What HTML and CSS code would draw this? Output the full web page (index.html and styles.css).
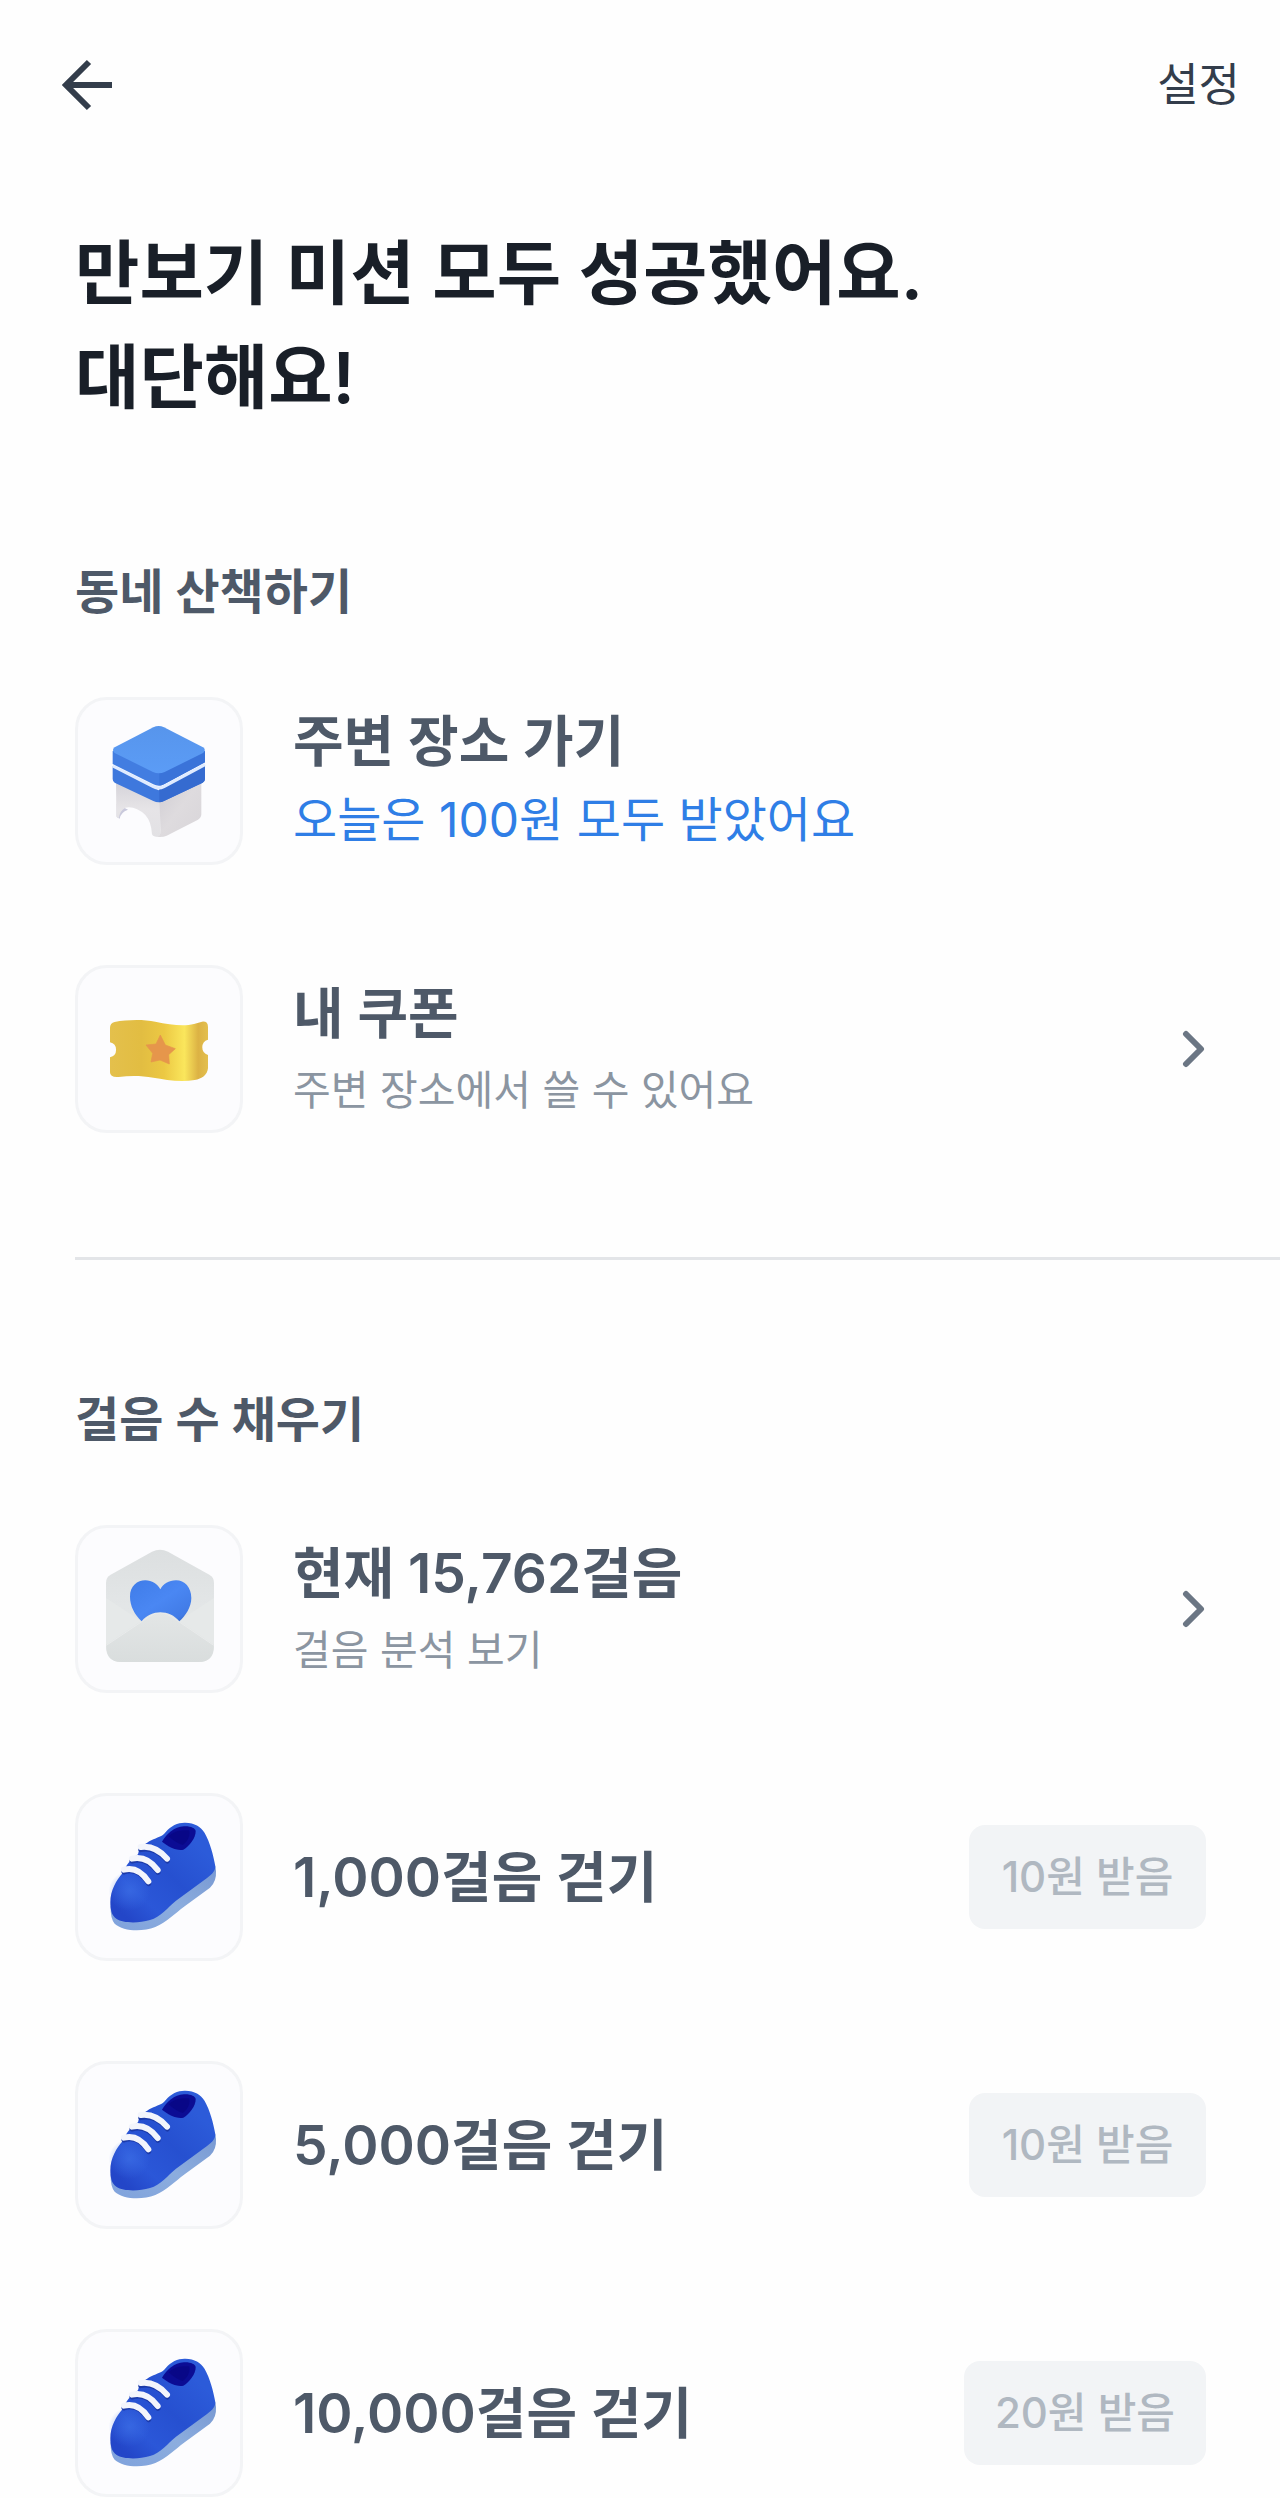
FILE: index.html
```html
<!DOCTYPE html>
<html lang="ko">
<head>
<meta charset="utf-8">
<meta name="viewport" content="width=device-width, initial-scale=1">
<title>만보기</title>
<link rel="stylesheet" href="styles.css">
</head>
<body>
<svg class="defs" width="0" height="0" aria-hidden="true">
  <defs>
    <linearGradient id="shoe-body" x1="0.1" y1="0.9" x2="0.8" y2="0.2">
      <stop offset="0" stop-color="#2346c8"/><stop offset="0.25" stop-color="#2b57d8"/><stop offset="0.6" stop-color="#2650d0"/><stop offset="1" stop-color="#2c5bd9"/>
    </linearGradient>
    <radialGradient id="shoe-toe" cx="0.5" cy="0.5" r="0.5">
      <stop offset="0" stop-color="#3c6ee6" stop-opacity="0.7"/><stop offset="1" stop-color="#3c6ee6" stop-opacity="0"/>
    </radialGradient>
    <linearGradient id="shoe-sole" x1="0" y1="1" x2="1" y2="0">
      <stop offset="0" stop-color="#7fa2dc"/><stop offset="0.5" stop-color="#8cadde"/><stop offset="1" stop-color="#7798d2"/>
    </linearGradient>
  </defs>
  <symbol id="shoe" viewBox="24 19 486 486">
    <path d="M122 350 Q121 388 134 402 C158 424 214 428 256 412 C290 398 314 372 344 350 L420 294 Q440 276 438 244 L436 230 Z" fill="url(#shoe-sole)"/>
    <path d="M121 338 C121 302 140 270 158 250 C170 222 188 204 204 194 C208 174 228 160 244 152 C262 142 276 142 288 126 C302 108 326 98 346 99 C374 100 392 110 404 130 C420 158 430 196 436 230 C436 246 424 256 404 270 L318 333 C292 354 272 382 240 391 C204 402 158 400 140 388 C124 378 121 358 121 338 Z" fill="url(#shoe-body)"/>
    <ellipse cx="178" cy="304" rx="62" ry="60" fill="url(#shoe-toe)"/>
    <path d="M276 156 C290 132 312 112 342 110 C362 109 376 116 377 124 C378 144 358 170 340 180 C318 184 294 170 276 156 Z" fill="#0b0c94"/>
    <path d="M296 140 C308 126 330 120 356 122 C364 128 354 158 338 166 Q314 158 296 140 Z" fill="#06057f" opacity="0.6"/>
    <g fill="none" stroke-linecap="round">
      <path d="M212 180 Q256 170 292 214 M186 214 Q230 200 264 248 M162 247 Q204 230 236 282" stroke="#1b3aa9" stroke-width="15"/>
      <path d="M212 172 Q256 166 291 207 M186 207 Q230 197 263 241 M162 240 Q204 229 235 275" stroke="#f3f5fc" stroke-width="18"/>
    </g>
  </symbol>
</svg>

<header class="topbar">
  <button class="back" type="button" aria-label="뒤로">
    <svg width="54" height="56" viewBox="0 0 54 56" fill="none" stroke="#333d4b" stroke-width="6" aria-hidden="true"><path d="M29 5 L6 28 L29 51 M7 28 H52"/></svg>
  </button>
  <a class="settings" href="#settings">설정</a>
</header>

<main>
  <h1>만보기 미션 모두 성공했어요.<br>대단해요!</h1>

  <section class="section" aria-labelledby="walk">
    <h2 id="walk">동네 산책하기</h2>
    <ul class="list">
      <li class="row">
        <span class="tile">
          <svg viewBox="24 29 486 486" aria-hidden="true">
            <defs>
              <linearGradient id="leg" x1="0" y1="0" x2="0" y2="1"><stop offset="0" stop-color="#d4d2d8"/><stop offset="0.5" stop-color="#e6e4e7"/><stop offset="1" stop-color="#e2e1e4"/></linearGradient>
              <linearGradient id="leg-side" x1="0" y1="0" x2="1" y2="1"><stop offset="0" stop-color="#cfccd2"/><stop offset="0.5" stop-color="#dedbde"/><stop offset="1" stop-color="#d8d5d9"/></linearGradient>
              <linearGradient id="seat-top" x1="0" y1="0" x2="0" y2="1"><stop offset="0" stop-color="#5795ec"/><stop offset="1" stop-color="#5b9cf6"/></linearGradient>
            </defs>
            <path d="M140 340 L174 358 Q152 366 149 385 L140 380 Z" fill="#c9c9dc"/>
            <path d="M138 270 L272 320 V440 Q250 442 246 432 Q244 394 226 374 Q196 346 166 352 Q148 362 147 384 L139 378 Z" fill="url(#leg)"/>
            <path d="M268 330 L394 268 V372 Q394 382 384 388 L290 436 Q280 441 264 440 Q272 436 272 420 Z" fill="url(#leg-side)"/>
            <path d="M128 228 L266 300 L405 224 V266 Q405 273 398 277 L282 332 Q266 340 250 332 L134 277 Q128 273 128 266 Z" fill="#3e78dd"/>
            <path d="M268 293 L405 224 V266 Q405 273 398 277 L282 332 Q276 336 268 336 Z" fill="#356bd0"/>
            <path d="M128 227 L250 289 Q266 297 282 289 L405 223" fill="none" stroke="#dfebff" stroke-width="9"/>
            <path d="M128 182 H405 V216 L282 282 Q266 290 250 282 L128 221 Z" fill="#427de1"/>
            <path d="M268 240 L405 182 V216 L282 282 Q276 286 268 286 Z" fill="#3a73d9"/>
            <path d="M134 171 L250 111 Q266 103 282 111 L399 171 Q410 179 399 188 L284 245 Q266 253 249 245 L134 188 Q124 179 134 171 Z" fill="url(#seat-top)"/>
          </svg>
        </span>
        <div class="text">
          <h3>주변 장소 가기</h3>
          <p class="done">오늘은 100원 모두 받았어요</p>
        </div>
      </li>
      <li>
        <a class="row" href="#coupons">
          <span class="tile">
            <svg viewBox="24 21 486 486" aria-hidden="true">
              <defs>
                <linearGradient id="gold"><stop offset="0" stop-color="#e4c04c"/><stop offset="0.32" stop-color="#e2bd42"/><stop offset="0.55" stop-color="#ecc843"/><stop offset="0.76" stop-color="#fae65c"/><stop offset="0.9" stop-color="#dcb244"/><stop offset="1" stop-color="#e3bf4e"/></linearGradient>
              </defs>
              <path d="M120 200 Q120 187 134 183 C170 176 220 175 256 182 C300 191 340 197 372 189 L396 182 Q414 180 414 198 V236 A24 24 0 0 0 414 282 V322 C412 342 396 354 374 357 C330 364 286 356 250 350 C214 344 180 344 146 348 Q120 350 120 334 V289 A23 23 0 0 0 120 244 Z" fill="url(#gold)"/>
              <path d="M271 222 L286 252 L316 263 L296 281 L298 309 L270 297 L243 303 L248 277 L228 252 L258 249 Z" fill="#e6964b" stroke="#e6964b" stroke-width="2" stroke-linejoin="round"/>
            </svg>
          </span>
          <span class="text">
            <strong>내 쿠폰</strong>
            <span class="note">주변 장소에서 쓸 수 있어요</span>
          </span>
          <svg class="chevron" width="24" height="40" viewBox="0 0 24 40" aria-hidden="true"><path d="M4 5 L19 20 L4 35"/></svg>
        </a>
      </li>
    </ul>
  </section>

  <hr>

  <section class="section" aria-labelledby="steps">
    <h2 id="steps">걸음 수 채우기</h2>
    <ul class="list">
      <li>
        <a class="row" href="#analysis">
          <span class="tile">
            <svg viewBox="24 26 486 486" aria-hidden="true">
              <defs>
                <linearGradient id="paper" x1="0" y1="0" x2="0" y2="1"><stop offset="0" stop-color="#dcdfe0"/><stop offset="0.5" stop-color="#e3e6e7"/><stop offset="1" stop-color="#e1e5e5"/></linearGradient>
                <linearGradient id="flap" x1="0" y1="0" x2="0" y2="1"><stop offset="0" stop-color="#e3e6e6"/><stop offset="1" stop-color="#d9dddd"/></linearGradient>
                <linearGradient id="heart" x1="0" y1="0" x2="1" y2="1"><stop offset="0" stop-color="#3f7ce8"/><stop offset="0.5" stop-color="#4a87f3"/><stop offset="0.85" stop-color="#417be6"/><stop offset="1" stop-color="#2a56ad"/></linearGradient>
              </defs>
              <path d="M108 190 Q108 174 122 166 L246 97 Q270 85 294 97 L418 166 Q432 174 432 190 V380 Q432 428 386 428 H154 Q108 428 108 380 Z" fill="url(#paper)"/>
              <path d="M108 236 L214 305 L108 376 Z M432 236 L326 305 L432 376 Z" fill="#e6e9e9"/>
              <path d="M109 378 L236 293 Q270 268 306 293 L431 378 Q432 428 386 428 H154 Q108 428 109 378 Z" fill="url(#flap)"/>
              <path d="M109 378 L236 293 Q270 268 306 293 L431 378" fill="none" stroke="#e9ebeb" stroke-width="3"/>
              <path d="M215 306 C194 286 180 260 180 232 C180 200 202 183 226 183 C246 183 262 194 271 210 C280 194 296 183 318 183 C344 183 364 204 364 236 C364 264 346 290 328 306 C300 272 246 268 215 306 Z" fill="url(#heart)"/>
            </svg>
          </span>
          <span class="text">
            <strong>현재 15,762걸음</strong>
            <span class="note">걸음 분석 보기</span>
          </span>
          <svg class="chevron" width="24" height="40" viewBox="0 0 24 40" aria-hidden="true"><path d="M4 5 L19 20 L4 35"/></svg>
        </a>
      </li>
      <li class="row">
        <span class="tile"><svg aria-hidden="true"><use href="#shoe"/></svg></span>
        <div class="text"><h3>1,000걸음 걷기</h3></div>
        <button class="reward" type="button" disabled>10원 받음</button>
      </li>
      <li class="row">
        <span class="tile"><svg aria-hidden="true"><use href="#shoe"/></svg></span>
        <div class="text"><h3>5,000걸음 걷기</h3></div>
        <button class="reward" type="button" disabled>10원 받음</button>
      </li>
      <li class="row">
        <span class="tile"><svg aria-hidden="true"><use href="#shoe"/></svg></span>
        <div class="text"><h3>10,000걸음 걷기</h3></div>
        <button class="reward" type="button" disabled>20원 받음</button>
      </li>
    </ul>
  </section>
</main>
</body>
</html>
```

FILE: styles.css
```css
* {
  box-sizing: border-box;
}

body {
  margin: 0;
  background: #fefefe;
  color: #4e5968;
  font-family: Inter, "Noto Sans CJK KR", sans-serif;
}

h1, h2, h3, p, ul {
  margin: 0;
  padding: 0;
}

ul {
  list-style: none;
}

a {
  color: inherit;
  text-decoration: none;
}

button {
  font-family: inherit;
  border: 0;
}

.defs {
  position: absolute;
}

.topbar {
  display: flex;
  align-items: center;
  justify-content: space-between;
  padding: 48px 40px 0 60px;
}

.back {
  display: flex;
  padding: 8px 0;
  background: none;
}

.settings {
  color: #333d4b;
  font-size: 45px;
  line-height: 74px;
}

h1 {
  padding: 100px 75px 0;
  color: #191f28;
  font-size: 70px;
  font-weight: 600;
  line-height: 104px;
}

.section {
  padding: 0 74px 0 75px;
}

h2 {
  font-size: 48px;
  font-weight: 600;
  line-height: 72px;
}

h1 + .section {
  padding-top: 126px;
}

.list {
  display: flex;
  flex-direction: column;
  gap: 100px;
  padding-top: 69px;
}

.row {
  display: flex;
  align-items: center;
  gap: 50px;
}

.tile {
  flex: none;
  width: 168px;
  height: 168px;
  border: 3px solid #f3f4f6;
  border-radius: 32px;
  background: #fcfcfe;
}

.tile svg {
  display: block;
  width: 100%;
  height: 100%;
}

.text {
  flex: 1;
  display: flex;
  flex-direction: column;
}

h3, strong {
  font-size: 55px;
  font-weight: 600;
  line-height: 82px;
}

.done {
  padding-bottom: 4px;
  color: #2f7ee6;
  font-size: 48px;
  line-height: 76px;
}

.note {
  color: #8b95a1;
  font-size: 41px;
  line-height: 72px;
}

.chevron {
  flex: none;
  fill: none;
  stroke: #6b7684;
  stroke-width: 6;
  stroke-linecap: round;
  stroke-linejoin: round;
}

.reward {
  flex: none;
  min-width: 237px;
  padding: 0 31px;
  border-radius: 16px;
  background: #f2f4f6;
  color: #b0b8c1;
  font-size: 42px;
  font-weight: 500;
  line-height: 104px;
}

hr {
  margin: 124px 0 124px 75px;
  border: 0;
  border-top: 3px solid #e3e5e8;
}
```
